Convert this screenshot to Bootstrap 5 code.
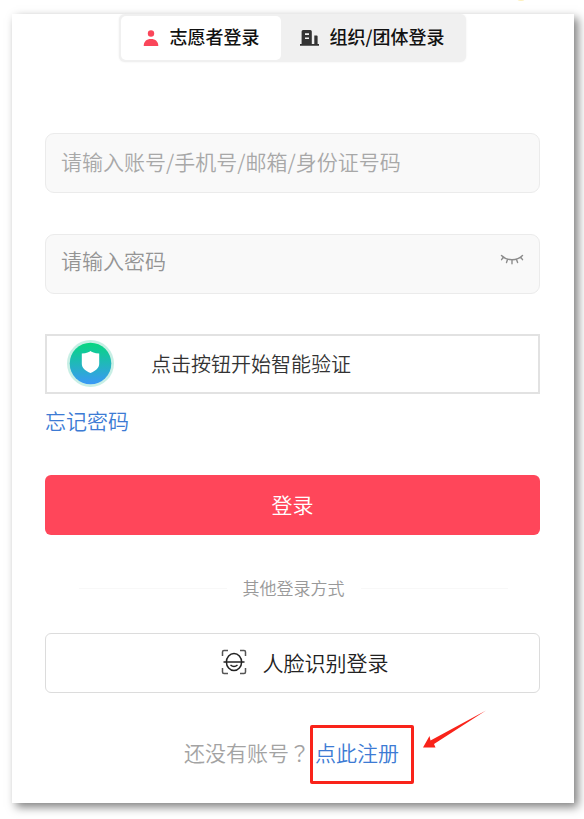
<!DOCTYPE html>
<html lang="zh-CN">
<head>
<meta charset="utf-8">
<meta name="viewport" content="width=device-width, initial-scale=1">
<title>登录</title>
<link href="https://cdn.jsdelivr.net/npm/bootstrap@5.3.0/dist/css/bootstrap.min.css" rel="stylesheet">
<style>
  body { font-family: "Noto Sans CJK SC", sans-serif; font-size: 21px; font-weight: 350; line-height: 30px; background: #fff; color: #333; padding: 14px 10px 16px 12px; }
  .sheet { background: #fff; box-shadow: 4px 4px 9px rgba(0,0,0,.5); padding: 0 34px 19px 33px; }
  .sun-tip { top: -4px; right: 59px; width: 8px; height: 5px; background: #fdf0bc; }
  .role-switch { background: #f0f0f0; padding: 2px; border-radius: 6px; box-shadow: 0 0 2px #ececec; margin-bottom: 71px; }
  .role-tab { border: 0; background: transparent; color: #111; height: 44px; border-radius: 5px; font-size: 18px; font-weight: 500; gap: 10px; padding: 0 19px 4px; }
  .role-tab.active { background: #fff; padding: 0 22px 4px; }
  .role-tab svg { flex: none; margin-top: 3px; }
  .field { height: 60px; border: 1px solid #ebebeb; border-radius: 9px; background: #f9f9f9; padding: 0 15px 4px; font-size: 21px; font-weight: 350; color: #333; }
  .field::placeholder { color: #a8a8a8; opacity: 1; }
  .field-user { margin-bottom: 41px; }
  .field-pass { padding-bottom: 9px; }
  .field-pass::placeholder { color: #949494; }
  .pass-row { margin-bottom: 40px; }
  .eye-btn { right: 16px; top: 16px; width: 24px; height: 20px; }
  .verify { height: 60px; border: 2px solid #e2e2e2; background: #fff; color: #333; font-size: 20px; font-weight: 350; padding: 0 20px; gap: 36px; margin-bottom: 11px; }
  .blue-link { color: #3d7bd4; text-decoration: none; }
  .submit { height: 60px; border: 0; border-radius: 6px; background: #ff465a; color: #fff; font-size: 21px; font-weight: 350; padding-bottom: 3px; margin: 40px 0 38px; }
  .other-way { font-size: 17px; color: #999; gap: 16px; padding: 0 32px 0 34px; margin-bottom: 30px; }
  .other-way::before, .other-way::after { content: ""; flex: 1; border-top: 1px solid #f8f8f8; }
  .face { height: 60px; border: 1px solid #dcdcdc; border-radius: 6px; background: #fff; color: #222; font-size: 21px; font-weight: 350; gap: 16px; padding: 0 0 2px 24px; margin-bottom: 32px; }
  .signup-row { padding-left: 13px; color: #a3a3a3; }
  .ask-mark { font-family: "Noto Sans CJK TC", sans-serif; }
  .signup { border: 3px solid #f9231a; border-radius: 2px; padding: 10px 12px 15px 2px; line-height: 28px; }
  .pointer { left: 100%; top: -18px; margin-left: 12px; }
</style>
<script src="https://cdn.jsdelivr.net/npm/bootstrap@5.3.0/dist/js/bootstrap.bundle.min.js"></script>
</head>
<body class="position-relative overflow-x-hidden">
<div class="sun-tip position-absolute rounded-circle"></div>
<main class="sheet">
  <div class="d-flex justify-content-center">
    <div class="role-switch d-flex">
      <button type="button" class="role-tab active d-flex align-items-center">
        <svg width="16" height="18" viewBox="0 0 16 18" fill="#fa465a" aria-hidden="true"><circle cx="8" cy="4.500" r="3.200"/><path d="M.7 17C.7 12.500 3.500 9.900 8 9.900s7.300 2.600 7.300 7.100z"/></svg>
        志愿者登录
      </button>
      <button type="button" class="role-tab d-flex align-items-center">
        <svg width="19" height="18" viewBox="0 0 19 18" aria-hidden="true"><path fill="#333" fill-rule="evenodd" d="M1.600 2.500Q1.600 1 3.100 1h7.200q1.500 0 1.500 1.500V15h2.500V6.400h2.400q.9 0 .9.900V15H19v1.800H0V15h1.600zM5 4.300v1.600h4V4.300zm0 4.200v1.600h4V8.500z"/></svg>
        组织/团体登录
      </button>
    </div>
  </div>

  <form>
    <input type="text" class="field field-user w-100 d-block" aria-label="账号" placeholder="请输入账号/手机号/邮箱/身份证号码">
    <div class="pass-row position-relative">
      <input type="password" class="field field-pass w-100 d-block" aria-label="密码" placeholder="请输入密码">
      <button type="button" class="eye-btn btn p-0 border-0 position-absolute d-flex align-items-center" aria-label="显示密码">
        <svg width="24" height="14" viewBox="0 0 24 14" fill="none" stroke="#8c8c8c" stroke-width="1.400" stroke-linecap="round" aria-hidden="true"><path d="M1.500 2.500C7 8.100 17 8.100 22.500 2.500M3.300 4.100 1.600 6.700M7.600 6.200 6.500 9.500M12 6.800v4M16.400 6.200l1.200 3.300M20.700 4.100l1.800 2.600"/></svg>
      </button>
    </div>

    <button type="button" class="verify w-100 d-flex align-items-center">
      <svg width="48" height="48" viewBox="0 0 48 48" aria-hidden="true">
        <defs><linearGradient id="shieldFill" x2="0" y2="1"><stop offset="0" stop-color="#06d77f"/><stop offset="1" stop-color="#3b98f6"/></linearGradient></defs>
        <circle cx="23.500" cy="23.500" r="23.500" fill="#c8efe5"/><circle cx="23.500" cy="23.500" r="20.800" fill="url(#shieldFill)"/>
        <path fill="#fff" d="M23.500 11q1.500 1.800 8.700 2.600V23.700c0 4.500-3.700 7-8.700 9.300-5-2.300-8.700-4.800-8.700-9.300V13.600q7.200-.8 8.700-2.600z"/>
      </svg>
      点击按钮开始智能验证
    </button>
    <a href="#" class="blue-link d-table">忘记密码</a>
    <button type="submit" class="submit w-100 d-block">登录</button>

    <div class="other-way d-flex align-items-center">其他登录方式</div>

    <button type="button" class="face w-100 d-flex align-items-center justify-content-center">
      <svg width="26" height="26" viewBox="0 0 26 26" fill="none" stroke="#222" stroke-width="1.500" aria-hidden="true"><path stroke="#555" d="M1.500 7V3q0-1.500 1.500-1.500h4M19 1.500h4q1.500 0 1.500 1.500v4M24.500 19v4q0 1.500-1.500 1.500h-4M7 24.500H3q-1.500 0-1.500-1.500v-4"/><ellipse cx="13" cy="13" rx="7.600" ry="8.600"/><path d="M2.500 13h21M9.500 16q3.500 3 7 0"/></svg>
      人脸识别登录
    </button>
  </form>

  <div class="signup-row d-flex align-items-baseline justify-content-center">
    <div>还没有账号<span class="ask-mark" lang="zh-TW">？</span></div>
    <div class="signup position-relative">
      <a href="#" class="blue-link">点此注册</a>
      <svg class="pointer position-absolute" width="64" height="40" viewBox="0 0 64 40" fill="#f9231a" aria-hidden="true"><path d="M0 37.500 6.500 26l1 4.500L63 .5 11 34l1.500 3.500z"/></svg>
    </div>
  </div>
</main>
</body>
</html>
